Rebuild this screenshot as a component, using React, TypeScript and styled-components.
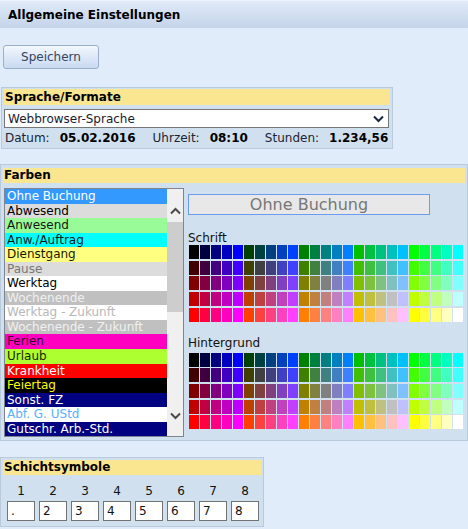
import React from "react";
import styled, { createGlobalStyle } from "styled-components";

const GlobalStyle = createGlobalStyle`
  html, body { margin: 0; padding: 0; }
  body {
    background: #e1ecfb;
    font-family: "DejaVu Sans", Verdana, sans-serif;
    font-size: 12px;
    color: #000;
  }
`;

const Page = styled.div`
  width: 468px;
  height: 529px;
  overflow: hidden;
  display: flex;
  flex-direction: column;
  align-items: flex-start;
`;

const TitleBar = styled.div`
  align-self: stretch;
  height: 28px;
  box-sizing: border-box;
  padding: 1px 0 0 8px;
  line-height: 27px;
  font-weight: bold;
  font-size: 12px;
  background: linear-gradient(#e0eaf8, #c4d4ea);
  border-top: 1px solid #eef3fb;
`;

const SaveButton = styled.button`
  margin: 17px 0 0 3px;
  width: 96px;
  height: 24px;
  box-sizing: border-box;
  border: 1px solid #9cafca;
  border-radius: 3px;
  background: linear-gradient(#f2f7fd, #c8daf1);
  font-family: "DejaVu Sans", Verdana, sans-serif;
  font-size: 12px;
  color: #33455f;
  padding: 0;
`;

const Section = styled.div<{ $width: number; $mt: number; $ml: number }>`
  box-sizing: border-box;
  width: ${(p) => p.$width}px;
  margin-top: ${(p) => p.$mt}px;
  margin-left: ${(p) => p.$ml}px;
  background: #d0e0ef;
  border: 1px solid #b9cadc;
  display: flex;
  flex-direction: column;
`;

const SectionHead = styled.div<{ $h: number }>`
  background: #fae591;
  height: ${(p) => p.$h}px;
  line-height: ${(p) => p.$h}px;
  font-weight: bold;
  padding-left: 1px;
`;

const LangBody = styled.div`
  padding: 1px 2px 1px 2px;
  display: flex;
  flex-direction: column;
`;

const FakeSelect = styled.div`
  margin-top: 4px;
  width: 385px;
  height: 19px;
  box-sizing: border-box;
  background: #fff;
  border: 1px solid #767676;
  display: flex;
  align-items: center;
  justify-content: space-between;
  padding: 0 4px 0 3px;
  color: #1b2030;
`;

const InfoRow = styled.div`
  margin-top: 1px;
  height: 18px;
  line-height: 18px;
  display: flex;
  padding-left: 1px;
  color: #1c2333;
`;

const InfoLabel = styled.span`
  margin-right: 10px;
`;

const InfoValue = styled.span<{ $last?: boolean }>`
  font-weight: bold;
  color: #000;
  margin-right: ${(p) => (p.$last ? 0 : 17)}px;
`;

const ColorsBody = styled.div`
  padding: 3px 2px 3px 2px;
  display: flex;
  flex-direction: column;
`;

const ColorsContent = styled.div`
  margin-top: 5px;
  display: flex;
  align-items: flex-start;
`;

const ListBox = styled.div`
  margin-left: 1px;
  width: 180px;
  box-sizing: border-box;
  border: 1px solid #7f8590;
  background: #fff;
  display: flex;
`;

const Items = styled.div`
  width: 162px;
  display: flex;
  flex-direction: column;
`;

const Item = styled.div<{ $bg: string; $fg: string }>`
  height: 14.55px;
  line-height: 14.55px;
  padding-left: 2px;
  background: ${(p) => p.$bg};
  color: ${(p) => p.$fg};
  white-space: nowrap;
  overflow: hidden;
`;

const ScrollBar = styled.div`
  width: 16px;
  background: #f0f0f0;
  display: flex;
  flex-direction: column;
`;

const ScrollBtn = styled.div<{ $h: number; $pt: number }>`
  height: ${(p) => p.$h}px;
  box-sizing: border-box;
  padding-top: ${(p) => p.$pt}px;
  display: flex;
  justify-content: center;
  align-items: flex-start;
`;

const Thumb = styled.div`
  height: 90px;
  background: #cdcdcd;
`;

const Track = styled.div`
  flex: 1;
`;

const RightCol = styled.div`
  margin-left: 4px;
  display: flex;
  flex-direction: column;
`;

const Preview = styled.div`
  margin-top: 6px;
  width: 242px;
  height: 21px;
  box-sizing: border-box;
  border: 1px solid #6e9bf0;
  background: #e8e8e8;
  color: #767676;
  font-size: 16px;
  line-height: 19px;
  text-align: center;
`;

const GridLabel = styled.div<{ $mt: number; $mb: number }>`
  margin-top: ${(p) => p.$mt}px;
  margin-bottom: ${(p) => p.$mb}px;
  height: 14px;
  line-height: 14px;
  color: #111;
`;

const Swatches = styled.div`
  margin-left: 1px;
  display: grid;
  grid-template-columns: repeat(25, 10px);
  grid-template-rows: repeat(5, 14px);
  column-gap: 1px;
  row-gap: 1.67px;
`;

const Swatch = styled.div.attrs<{ $c: string }>((p) => ({
  style: { background: p.$c },
}))<{ $c: string }>``;

const ShiftBody = styled.div`
  padding: 2px 2px 5px 2px;
  display: flex;
  flex-direction: column;
`;

const ShiftGrid = styled.div`
  margin-left: 4px;
  display: grid;
  grid-template-columns: repeat(8, 28px);
  column-gap: 4px;
`;

const ShiftNum = styled.div`
  margin-top: 9px;
  height: 14px;
  line-height: 14px;
  text-align: center;
  color: #111;
`;

const ShiftInput = styled.div`
  margin-top: 3px;
  height: 20px;
  box-sizing: border-box;
  border: 1px solid #737373;
  background: #fff;
  line-height: 18px;
  padding-left: 3px;
  color: #111;
`;

const Chevron = ({ up, color = "#4a4a4a" }: { up?: boolean; color?: string }) => (
  <svg width="11" height="8" viewBox="0 0 11 8">
    <polyline
      points={up ? "1,6.5 5.5,2 10,6.5" : "1,1.5 5.5,6 10,1.5"}
      fill="none"
      stroke={color}
      strokeWidth="2"
    />
  </svg>
);

const items: { t: string; bg: string; fg: string }[] = [
  { t: "Ohne Buchung", bg: "#3399ff", fg: "#ffffff" },
  { t: "Abwesend", bg: "#dcdcdc", fg: "#000000" },
  { t: "Anwesend", bg: "#98fb98", fg: "#101810" },
  { t: "Anw./Auftrag", bg: "#00ffff", fg: "#001818" },
  { t: "Dienstgang", bg: "#ffff80", fg: "#181800" },
  { t: "Pause", bg: "#dcdcdc", fg: "#777777" },
  { t: "Werktag", bg: "#ffffff", fg: "#000000" },
  { t: "Wochenende", bg: "#c0c0c0", fg: "#f0f0f0" },
  { t: "Werktag - Zukunft", bg: "#ffffff", fg: "#b8b8b8" },
  { t: "Wochenende - Zukunft", bg: "#c0c0c0", fg: "#f0f0f0" },
  { t: "Ferien", bg: "#ff00c0", fg: "#3a0030" },
  { t: "Urlaub", bg: "#adff2f", fg: "#1a2600" },
  { t: "Krankheit", bg: "#ff0000", fg: "#ffffff" },
  { t: "Feiertag", bg: "#000000", fg: "#ffff00" },
  { t: "Sonst. FZ", bg: "#000080", fg: "#ffffff" },
  { t: "Abf. G. ÜStd", bg: "#ffffff", fg: "#5ab0ff" },
  { t: "Gutschr. Arb.-Std.", bg: "#000080", fg: "#ffffff" },
];

const levels = ["00", "40", "80", "c0", "ff"];
const palette: string[] = [];
for (let r = 0; r < 5; r++) {
  for (let c = 0; c < 25; c++) {
    palette.push(`#${levels[r]}${levels[Math.floor(c / 5)]}${levels[c % 5]}`);
  }
}

const ColorGrid = () => (
  <Swatches>
    {palette.map((c, i) => (
      <Swatch key={i} $c={c} />
    ))}
  </Swatches>
);

const shifts = [".", "2", "3", "4", "5", "6", "7", "8"];

export default function App() {
  return (
    <>
      <GlobalStyle />
      <Page>
        <TitleBar>Allgemeine Einstellungen</TitleBar>
        <SaveButton>Speichern</SaveButton>

        <Section $width={392} $mt={18} $ml={1}>
          <LangBody>
            <SectionHead $h={16}>Sprache/Formate</SectionHead>
            <FakeSelect>
              <span>Webbrowser-Sprache</span>
              <Chevron color="#1a2a44" />
            </FakeSelect>
            <InfoRow>
              <InfoLabel>Datum:</InfoLabel>
              <InfoValue>05.02.2016</InfoValue>
              <InfoLabel>Uhrzeit:</InfoLabel>
              <InfoValue>08:10</InfoValue>
              <InfoLabel>Stunden:</InfoLabel>
              <InfoValue $last>1.234,56</InfoValue>
            </InfoRow>
          </LangBody>
        </Section>

        <Section $width={468} $mt={15} $ml={0}>
          <ColorsBody>
            <SectionHead $h={15}>Farben</SectionHead>
            <ColorsContent>
              <ListBox>
                <Items>
                  {items.map((it) => (
                    <Item key={it.t} $bg={it.bg} $fg={it.fg}>
                      {it.t}
                    </Item>
                  ))}
                </Items>
                <ScrollBar>
                  <ScrollBtn $h={33} $pt={18}>
                    <Chevron up />
                  </ScrollBtn>
                  <Thumb />
                  <Track />
                  <ScrollBtn $h={32} $pt={8}>
                    <Chevron />
                  </ScrollBtn>
                </ScrollBar>
              </ListBox>
              <RightCol>
                <Preview>Ohne Buchung</Preview>
                <GridLabel $mt={16} $mb={0}>Schrift</GridLabel>
                <ColorGrid />
                <GridLabel $mt={14} $mb={3}>Hintergrund</GridLabel>
                <ColorGrid />
              </RightCol>
            </ColorsContent>
          </ColorsBody>
        </Section>

        <Section $width={264} $mt={16} $ml={0}>
          <ShiftBody>
            <SectionHead $h={15}>Schichtsymbole</SectionHead>
            <ShiftGrid>
              {shifts.map((_, i) => (
                <ShiftNum key={"n" + i}>{i + 1}</ShiftNum>
              ))}
              {shifts.map((s, i) => (
                <ShiftInput key={"i" + i}>{s}</ShiftInput>
              ))}
            </ShiftGrid>
          </ShiftBody>
        </Section>
      </Page>
    </>
  );
}
